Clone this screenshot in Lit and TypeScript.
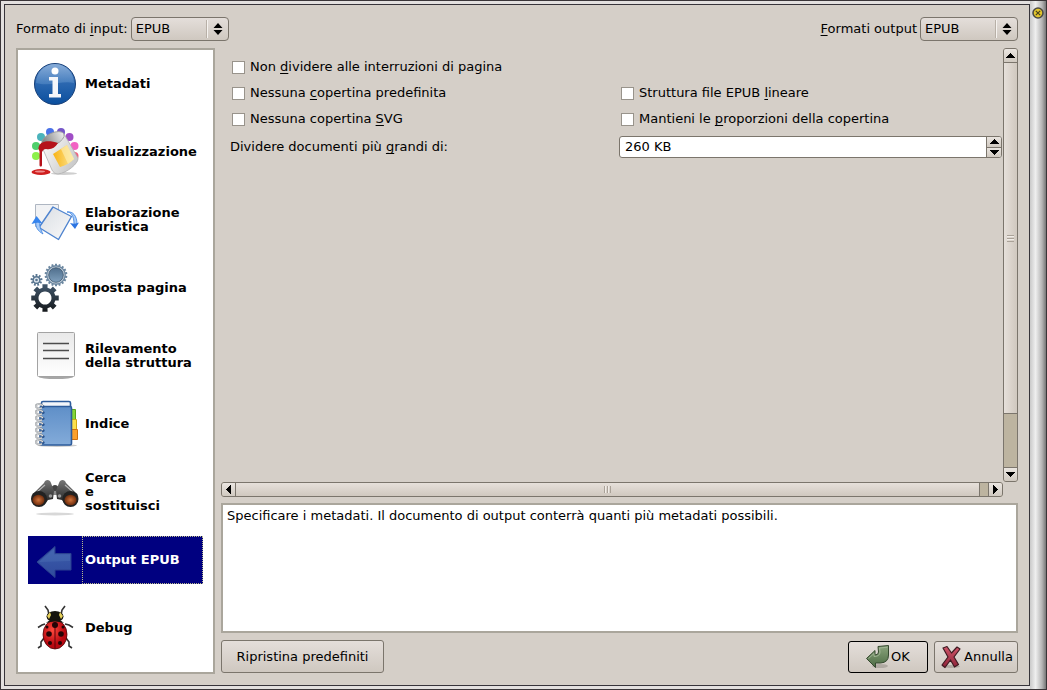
import { LitElement, html, css, svg, nothing, TemplateResult } from "lit";
import { customElement, property, state } from "lit/decorators.js";

/** Builds the outline of a cog wheel centred on (cx, cy). */
function cog(cx: number, cy: number, outer: number, inner: number, teeth: number): string {
  const points: string[] = [];
  const step = (Math.PI * 2) / teeth;
  const at = (r: number, a: number) =>
    `${(cx + r * Math.cos(a)).toFixed(2)} ${(cy + r * Math.sin(a)).toFixed(2)}`;
  for (let i = 0; i < teeth; i++) {
    const a = i * step - Math.PI / 2;
    points.push(at(inner, a - step * 0.3), at(outer, a - step * 0.24));
    points.push(at(outer, a + step * 0.24), at(inner, a + step * 0.3));
  }
  return `M${points.join("L")}Z`;
}

const gradient = (id: string, from: string, to: string, x2 = 0, y2 = 1) => svg`
  <linearGradient id=${id} x1="0" y1="0" x2=${x2} y2=${y2}>
    <stop offset="0" stop-color=${from}></stop><stop offset="1" stop-color=${to}></stop>
  </linearGradient>`;

const picture = (width: number, body: TemplateResult) =>
  html`<svg class="pic" width=${width} height="48" viewBox="0 0 ${width} 48" aria-hidden="true">${body}</svg>`;

const info = picture(48, svg`
  <defs>${gradient("in1", "#4a7ec0", "#0a4f9e")}${gradient("in2", "#a9c6e6", "#4f86c4")}</defs>
  <circle cx="25" cy="24" r="20.5" fill="url(#in1)" stroke="#173f78"></circle>
  <path d="M6 23a19 19 0 0 1 38 0c-11-3-24 4-38 0z" fill="url(#in2)" opacity=".65"></path>
  <circle cx="25" cy="11" r="3.500" fill="#fff"></circle>
  <path d="M19 17h9v17h3v3.500H19V34h3.500V20.500H19z" fill="#f4f6fa"></path>`);

const paint = picture(48, svg`
  <defs>${gradient("pa1", "#ffffff", "#c9c9c9", 1, 0.6)}${gradient("pa2", "#f9b314", "#fbe79a", 1, 0)}
  ${gradient("pa3", "#777", "#eee", 1, 0)}</defs>
  <circle cx="6" cy="18" r="4" fill="#4fcf6c"></circle><circle cx="6" cy="28" r="4" fill="#8df04c"></circle>
  <circle cx="11" cy="9" r="4" fill="#4bb3bb"></circle><circle cx="20" cy="4" r="4" fill="#4a72e8"></circle>
  <circle cx="31" cy="4" r="4" fill="#7657c8"></circle><circle cx="39.500" cy="9" r="4" fill="#a04ec6"></circle>
  <circle cx="44.500" cy="18" r="4" fill="#f263c4"></circle><circle cx="44.500" cy="28" r="4" fill="#f2617c"></circle>
  <ellipse cx="34" cy="45.500" rx="13" ry="1.500" fill="#bbb" opacity=".7"></ellipse>
  <path d="M12 19 34 6 48 30c1 5-11 15-20 16-3 0-5-2-6-4z" fill="url(#pa1)" stroke="#b0b0b0" stroke-width=".8"></path>
  <path d="m23 26 14-9 7 14q-6 6-14 8z" fill="url(#pa2)"></path>
  <path d="m31 21 6-4 7 14-6 5z" fill="#fdf0b8" opacity=".6"></path>
  <ellipse cx="23" cy="11" rx="12" ry="6" transform="rotate(-25 23 11)" fill="url(#pa3)" stroke="#999" stroke-width=".8"></ellipse>
  <path d="M9 18c2-5 10-6 19-3-3 5-7 7-12 6-2 0-3 1-4 3v13c0 2-2.500 2-2.500 0V23c-1-1-1.500-3-.5-5z" fill="#b5121b"></path>
  <ellipse cx="11" cy="44" rx="9.500" ry="3" fill="#cf1f1f"></ellipse>
  <ellipse cx="10" cy="43.500" rx="5" ry="1" fill="#ee8c8c"></ellipse>`);

const heuristic = picture(48, svg`
  <defs>${gradient("he1", "#d9dde3", "#fafafa", 1, 1)}</defs>
  <path d="M5.500 8.500h23v22h-23z" fill="#f1f2f4" stroke="#aeb6c2"></path>
  <path d="m23 11 18.500 9.500L28.500 43.500 9 31.500z" fill="url(#he1)" stroke="#4f84cf" stroke-width="1.400" stroke-linejoin="round"></path>
  <path d="M6 26c-1 5 2 9 7 12-2-4-4-8-3-12z" fill="#a7cbf8" stroke="#3a80e0" stroke-width=".8"></path>
  <path d="m1.500 28 5-8 6 7.500-5-1z" fill="#3584ee"></path>
  <path d="M37 16c4 0 7 4 7 12h3c0-8-4-13-10-12z" fill="#a7cbf8" stroke="#3a80e0" stroke-width=".8"></path>
  <path d="m40 27 5 1 4-1.500-4 6.500z" fill="#2b74e2"></path>`);

const gears = picture(36, svg`
  <defs>${gradient("ge1", "#41576c", "#15181b")}${gradient("ge2", "#4f6e8c", "#7fa0bd")}</defs>
  <path d=${cog(26, 11, 11.4, 9.8, 18)} fill="#6c87a0"></path>
  <circle cx="26" cy="11" r="8.600" fill="#c7d3de"></circle>
  <circle cx="26" cy="11" r="7.300" fill="url(#ge2)" stroke="#3c556d" stroke-width=".8"></circle>
  <path d=${cog(6.5, 16, 6, 4, 9)} fill="#587590"></path>
  <circle cx="6.500" cy="16" r="2.600" fill="#dfe7ee"></circle><circle cx="6.500" cy="16" r="1.300" fill="#587590"></circle>
  <path fill-rule="evenodd" d="${cog(15, 34, 14, 10.6, 8)}M15 27.500a6.500 6.500 0 1 0 .01 0z" fill="url(#ge1)"></path>`);

const structure = picture(48, svg`
  <defs>${gradient("st1", "#e9e9e9", "#ffffff")}</defs>
  <ellipse cx="26" cy="45" rx="17" ry="2" fill="#a6a6a6"></ellipse>
  <rect x="7.500" y=".5" width="37" height="44" rx="1" fill="url(#st1)" stroke="#a3a3a3"></rect>
  <path d="M13 11.500h26M13 18.500h26M13 26.500h26" stroke="#4c4c4c" stroke-width="1.400"></path>`);

const notebook = picture(48, svg`
  <defs>${gradient("no1", "#5f8fc8", "#83abd9")}</defs>
  <ellipse cx="27" cy="45.500" rx="20" ry="1.500" fill="#ccc"></ellipse>
  <path d="M41.500 9.500h4v10h-4z" fill="#85d636" stroke="#5aa51a"></path>
  <path d="M41.500 19.500h5v10h-5z" fill="#fbe04c" stroke="#cfa912"></path>
  <path d="M41.500 29.500h6v10h-6z" fill="#fba02c" stroke="#d3700a"></path>
  <rect x="11.500" y="1.500" width="29" height="9" rx="1.500" fill="#f3f6fa" stroke="#2d5c9c" stroke-width="1.600"></rect>
  <rect x="10" y="6.500" width="31.500" height="38.500" rx="1.500" fill="url(#no1)" stroke="#2d5c9c" stroke-width="1.600"></rect>
  ${[5, 11, 17, 23, 29, 35, 41].map((y) => svg`
    <circle cx="13" cy=${y + 1.5} r="1.600" fill="#2a5590"></circle>
    <path d="M13 ${y + 1}c-3-3-7-2-7 0s3 3 6 2" fill="none" stroke="#8f9499" stroke-width="2"></path>
    <path d="M13 ${y + 1}c-3-3-7-2-7 0s3 3 6 2" fill="none" stroke="#f0f1f2" stroke-width=".9"></path>`)}`);

const binoculars = picture(48, svg`
  <defs>${gradient("bi1", "#777", "#1c1c1c")}
  <radialGradient id="bi2"><stop offset="0" stop-color="#d0733a"></stop><stop offset="1" stop-color="#6e2c0c"></stop></radialGradient></defs>
  <ellipse cx="25" cy="46" rx="19" ry="1.500" fill="#d8d8d8"></ellipse>
  <path d="M20 18h10v9H20z" fill="#8a8a8a"></path><circle cx="25" cy="20" r="3" fill="#444"></circle>
  <path d="M2 27 14 15c1-4 6-4 7 0l3 8-1 8-5 1-3 4z" fill="url(#bi1)"></path>
  <path d="M48 27 36 15c-1-4-6-4-7 0l-3 8 1 8 5 1 3 4z" fill="url(#bi1)"></path>
  <path d="m7 24 8-7M43 24l-8-7" stroke="#b5b5b5" stroke-width="1.200"></path>
  <circle cx="9" cy="31" r="8" fill="#222"></circle><circle cx="40.500" cy="31" r="8" fill="#222"></circle>
  <ellipse cx="8.500" cy="32" rx="6" ry="5.300" fill="url(#bi2)"></ellipse>
  <ellipse cx="40.500" cy="32" rx="6" ry="5.300" fill="url(#bi2)"></ellipse>
  <circle cx="20.500" cy="28" r="1.800" fill="#999"></circle><circle cx="29.500" cy="28" r="1.800" fill="#999"></circle>`);

const arrow = picture(48, svg`
  <defs>${gradient("ar1", "#3d5dab", "#2f4a9c")}</defs>
  <path d="M7 26 25 10.500V17.500H41V34H25V41.500z" fill="url(#ar1)" stroke="#2a4190"></path>
  <path d="M9 26 24 13V18.500H40V25z" fill="#5377ba" opacity=".35"></path>`);

const ladybug = picture(48, svg`
  <defs><radialGradient id="la1" cx=".4" cy=".35"><stop offset="0" stop-color="#ff4a3d"></stop>
  <stop offset="1" stop-color="#b80710"></stop></radialGradient></defs>
  <path d="m19 11-1-5-3-4M31 11l1-5 3-4M15 20l-3 1-4 2.500M35 20l4 1 4 2.500M14 34l-3 4 0 4-3 2M36 34l3 4 0 4 3 2" fill="none" stroke="#333" stroke-width="1.600"></path>
  <ellipse cx="25" cy="12.500" rx="8.500" ry="5.500" fill="#15140e"></ellipse>
  <path d="m17 12 3-4 1 3-2 4zM33 12l-3-4-1 3 2 4z" fill="#e5d05a"></path>
  <ellipse cx="25" cy="30.500" rx="12" ry="14.500" fill="url(#la1)" stroke="#4a0508" stroke-width=".8"></ellipse>
  <path d="M16 19q9-8 18 0-9-3-18 0z" fill="#15140e"></path>
  <path d="M25 18v27" stroke="#5c0308"></path>
  <circle cx="25" cy="21" r="3" fill="#240406"></circle><circle cx="19" cy="30" r="2.800" fill="#240406"></circle>
  <circle cx="31" cy="30" r="2.800" fill="#240406"></circle><circle cx="17" cy="23" r="1.500" fill="#240406"></circle>
  <circle cx="33" cy="23" r="1.500" fill="#240406"></circle><circle cx="20" cy="39" r="2" fill="#240406"></circle>
  <circle cx="30" cy="39" r="2" fill="#240406"></circle>`);

interface Section {
  icon: TemplateResult;
  lines: string[];
}

const sections: Section[] = [
  { icon: info, lines: ["Metadati"] },
  { icon: paint, lines: ["Visualizzazione"] },
  { icon: heuristic, lines: ["Elaborazione", "euristica"] },
  { icon: gears, lines: ["Imposta pagina"] },
  { icon: structure, lines: ["Rilevamento", "della struttura"] },
  { icon: notebook, lines: ["Indice"] },
  { icon: binoculars, lines: ["Cerca", "e", "sostituisci"] },
  { icon: arrow, lines: ["Output EPUB"] },
  { icon: ladybug, lines: ["Debug"] },
];

const triangles: Record<string, string> = {
  up: "M0 5h9L4.500 0z",
  down: "M0 0h9L4.500 5z",
  left: "M5 0v9L0 4.500z",
  right: "M0 0v9l5-4.500z",
};

const triangle = (direction: string) => {
  const flat = direction === "up" || direction === "down";
  return html`<svg width=${flat ? 9 : 5} height=${flat ? 5 : 9} aria-hidden="true">
    <path d=${triangles[direction]} shape-rendering="crispEdges"></path></svg>`;
};

@customElement("scroll-strip")
export class ScrollStrip extends LitElement {
  @property({ reflect: true }) orientation: "vertical" | "horizontal" = "vertical";
  @property({ type: Number }) thumb = 80;

  static styles = css`
    :host {
      display: flex;
      box-sizing: border-box;
      background: #bdb4a0;
      border: 1px solid #7b756c;
      border-radius: 3px;
      overflow: hidden;
    }
    :host([orientation="vertical"]) {
      flex-direction: column;
      width: 15px;
    }
    :host([orientation="horizontal"]) {
      height: 15px;
    }
    button {
      all: unset;
      box-sizing: border-box;
      flex: none;
      display: grid;
      place-items: center;
      width: 13px;
      height: 13px;
      background: linear-gradient(#ebe6e1, #d0c9c0);
    }
    .track {
      flex: 1;
      display: flex;
      flex-direction: inherit;
    }
    :host([orientation="vertical"]) .track {
      border-top: 1px solid #7b756c;
      border-bottom: 1px solid #7b756c;
    }
    :host([orientation="horizontal"]) .track {
      border-left: 1px solid #7b756c;
      border-right: 1px solid #7b756c;
    }
    .thumb {
      box-sizing: border-box;
      display: grid;
      place-items: center;
    }
    :host([orientation="vertical"]) .thumb {
      border-bottom: 1px solid #7b756c;
      background: linear-gradient(90deg, #e6e0da, #d0c8bf);
    }
    :host([orientation="horizontal"]) .thumb {
      border-right: 1px solid #7b756c;
      background: linear-gradient(#e6e0da, #d0c8bf);
    }
    .grip {
      width: 7px;
      height: 7px;
    }
    :host([orientation="vertical"]) .grip {
      background: repeating-linear-gradient(#aaa298 0 1px, #f1ede8 1px 2px, transparent 2px 3px);
    }
    :host([orientation="horizontal"]) .grip {
      background: repeating-linear-gradient(90deg, #aaa298 0 1px, #f1ede8 1px 2px, transparent 2px 3px);
    }
  `;

  render() {
    const vertical = this.orientation === "vertical";
    return html`
      <button tabindex="-1" aria-label=${vertical ? "Su" : "Sinistra"}>${triangle(vertical ? "up" : "left")}</button>
      <div class="track">
        <div class="thumb" style="flex-basis:${this.thumb}%"><span class="grip"></span></div>
      </div>
      <button tabindex="-1" aria-label=${vertical ? "Giù" : "Destra"}>${triangle(vertical ? "down" : "right")}</button>
    `;
  }
}

@customElement("app-root")
export class AppRoot extends LitElement {
  @state() private current = 7;

  static styles = css`
    :host {
      display: flex;
      box-sizing: border-box;
      min-height: 100vh;
      border: 1px solid #3a3538;
      background: #e3e0df;
      font: 13px/16px "DejaVu Sans", sans-serif;
      color: #000;
    }
    button, input, select, textarea {
      font: inherit;
      color: inherit;
      margin: 0;
      box-sizing: border-box;
    }
    u {
      text-underline-offset: 2px;
      text-decoration-thickness: 1px;
      text-decoration-skip-ink: none;
    }
    .dialog {
      flex: 1;
      min-width: 0;
      display: flex;
      flex-direction: column;
      gap: 7px;
      margin: 3px 0;
      margin-left: 3px;
      padding: 12px 11px 11px;
      border: 1px solid #37343a;
      background: #d5cfc8;
    }
    .edge {
      width: 16px;
      display: flex;
      justify-content: center;
      align-items: flex-start;
      padding-top: 6px;
      box-sizing: border-box;
      background: linear-gradient(90deg, #c9c9c9, #efefef 35%, #b5b5b5 75%, #777);
    }
    .close {
      all: unset;
      display: flex;
    }
    .formats {
      display: flex;
      justify-content: space-between;
    }
    .format {
      display: flex;
      align-items: center;
      gap: 3px;
    }
    .combo {
      display: grid;
      align-items: center;
      width: 98px;
      height: 24px;
      box-sizing: border-box;
      border: 1px solid #7b756c;
      border-radius: 4px;
      background: linear-gradient(#e4deda, #cfc8c0);
    }
    .combo select, .combo .marks {
      grid-area: 1 / 1;
    }
    .combo select {
      appearance: none;
      border: 0;
      outline: 0;
      background: none;
      height: 22px;
      padding: 0 22px 0 4px;
    }
    .combo .marks {
      justify-self: end;
      width: 20px;
      height: 18px;
      border-left: 1px solid #f6f3f0;
      box-shadow: -1px 0 #b8b0a7;
      pointer-events: none;
    }
    .body {
      flex: 1;
      display: grid;
      grid-template-columns: 199px minmax(0, 1fr);
      gap: 6px;
    }
    .sections {
      display: flex;
      flex-direction: column;
      gap: 20px;
      padding: 10px;
      border: 2px solid #aaa69c;
      background: #fff;
    }
    .section {
      all: unset;
      box-sizing: border-box;
      display: flex;
      align-items: center;
      gap: 7px;
      height: 48px;
      padding-left: 2px;
      font-weight: bold;
      line-height: 14px;
    }
    .section .pic {
      flex: none;
      overflow: visible;
    }
    .section .caption {
      display: block;
    }
    .section.chosen {
      gap: 4px;
      color: #fff;
      background: #000080;
    }
    .section.chosen .caption {
      flex: 1;
      box-sizing: border-box;
      height: 48px;
      display: flex;
      align-items: center;
      padding-left: 2px;
      border: 1px dotted #b9b98a;
    }
    .main {
      display: flex;
      flex-direction: column;
    }
    .viewport {
      flex: 1;
      display: grid;
      grid-template: minmax(0, 1fr) 15px / minmax(0, 1fr) 15px;
    }
    .options {
      display: grid;
      grid-template-columns: 1fr 1fr;
      grid-auto-rows: minmax(20px, max-content);
      align-content: start;
      align-items: center;
      gap: 6px;
      padding: 9px 1px 0 9px;
    }
    .tick {
      display: flex;
      align-items: center;
      gap: 5px;
      padding-left: 2px;
    }
    .tick.wide {
      grid-column: 1 / -1;
    }
    .tick input {
      appearance: none;
      width: 13px;
      height: 13px;
      border: 1px solid #98938b;
      background: #fff;
    }
    .tick input:checked {
      box-shadow: inset 0 0 0 2px #fff;
      background: #333;
    }
    .spin {
      display: flex;
      height: 22px;
      margin: 1px 0;
      box-sizing: border-box;
      border: 1px solid #7b756c;
      border-radius: 3px;
      background: #fff;
      overflow: hidden;
    }
    .spin input {
      flex: 1;
      min-width: 0;
      border: 0;
      outline: 0;
      padding: 0 5px;
      background: none;
    }
    .steps {
      display: flex;
      flex-direction: column;
      width: 14px;
      border-left: 1px solid #7b756c;
    }
    .steps button {
      all: unset;
      flex: 1;
      display: grid;
      place-items: center;
      background: linear-gradient(#e9e4df, #d0c9c0);
    }
    .steps button + button {
      border-top: 1px solid #7b756c;
    }
    .help {
      display: block;
      width: 100%;
      height: 130px;
      margin-top: 6px;
      padding: 3px 4px;
      resize: none;
      border: 2px solid #aaa69c;
      outline: 0;
      background: #fff;
    }
    .actions {
      display: flex;
      align-items: center;
      gap: 6px;
      padding: 7px 0 1px;
    }
    .action {
      display: flex;
      align-items: center;
      justify-content: center;
      gap: 1px;
      width: 84px;
      height: 32px;
      padding: 0;
      border: 1px solid #7b756c;
      border-radius: 3px;
      background: linear-gradient(#e4deda, #cfc8c0);
      white-space: nowrap;
    }
    .reset {
      width: 163px;
      height: 33px;
      margin-right: auto;
    }
    .confirm {
      width: 80px;
      border-color: #000;
    }
  `;

  private combo(id: string) {
    return html`<span class="combo">
      <select id=${id}><option>EPUB</option></select>
      <svg class="marks" viewBox="-5 -3 19 18" aria-hidden="true">
        <path d="M0 5h9L4.500 0zM0 7h9l-4.500 5z"></path>
      </svg>
    </span>`;
  }

  private tick(label: TemplateResult, wide = false) {
    return html`<label class="tick ${wide ? "wide" : ""}"><input type="checkbox" /><span>${label}</span></label>`;
  }

  render() {
    return html`
      <main class="dialog">
        <header class="formats">
          <div class="format">
            <label for="input-format">Formato di <u>i</u>nput:</label>${this.combo("input-format")}
          </div>
          <div class="format">
            <label for="output-format"><u>F</u>ormati output</label>${this.combo("output-format")}
          </div>
        </header>
        <div class="body">
          <nav class="sections">
            ${sections.map((section, index) => html`
              <button
                class="section ${index === this.current ? "chosen" : ""}"
                aria-current=${index === this.current ? "page" : nothing}
                @click=${() => (this.current = index)}
              >${section.icon}<span class="caption">${section.lines.map((line, i) => html`${i ? html`<br />` : nothing}${line}`)}</span></button>`)}
          </nav>
          <div class="main">
            <div class="viewport">
              <div class="options">
                ${this.tick(html`Non <u>d</u>ividere alle interruzioni di pagina`, true)}
                ${this.tick(html`Nessuna <u>c</u>opertina predefinita`)}
                ${this.tick(html`Struttura file EPUB <u>l</u>ineare`)}
                ${this.tick(html`Nessuna copertina <u>S</u>VG`)}
                ${this.tick(html`Mantieni le <u>p</u>roporzioni della copertina`)}
                <label for="split-size">Dividere documenti più <u>g</u>randi di:</label>
                <div class="spin">
                  <input id="split-size" type="text" value="260 KB" />
                  <span class="steps">
                    <button tabindex="-1" aria-label="Aumenta">${triangle("up")}</button>
                    <button tabindex="-1" aria-label="Diminuisci">${triangle("down")}</button>
                  </span>
                </div>
              </div>
              <scroll-strip orientation="vertical" .thumb=${87}></scroll-strip>
              <scroll-strip orientation="horizontal" .thumb=${99}></scroll-strip>
            </div>
            <textarea class="help" readonly aria-label="Descrizione" .value=${"Specificare i metadati. Il documento di output conterrà quanti più metadati possibili."}></textarea>
            <footer class="actions">
              <button class="action reset">Ripristina predefiniti</button>
              <button class="action confirm">
                <svg width="24" height="24" viewBox="0 0 24 24" aria-hidden="true">
                  <defs>${gradient("ok1", "#8aa37c", "#4c6b43")}</defs>
                  <ellipse cx="14" cy="21" rx="8" ry="2" fill="#8d887f" opacity=".5"></ellipse>
                  <path d="M.5 13.500 9 5.500V10q3.500 0 3.500-3L12 1.500 22.500.5V10q0 7.500-8 8H9.500v4.500z" fill="url(#ok1)" stroke="#34482e" stroke-linejoin="round"></path>
                  <path d="m2.500 13.500 5.500-5V11.500q6 0 6-4.500L13.500 3l8-.800" fill="none" stroke="#a9bd9d" stroke-width=".8"></path>
                </svg>OK
              </button>
              <button class="action">
                <svg width="24" height="24" viewBox="0 0 24 24" aria-hidden="true">
                  <defs>${gradient("no2", "#d0566a", "#8e2238")}</defs>
                  <ellipse cx="12" cy="21.500" rx="9" ry="1.500" fill="#8d887f" opacity=".5"></ellipse>
                  <path d="m4 3 4-1.500 4.500 6.500L18 2l3 2-6 8 4.500 7.500-4 2.500-4-7L6 22.500 3 20l6-8z" fill="url(#no2)" stroke="#3f1b22" stroke-width="1.200" stroke-linejoin="round"></path>
                </svg>Annulla
              </button>
            </footer>
          </div>
        </div>
      </main>
      <aside class="edge">
        <button class="close" aria-label="Chiudi">
          <svg width="12" height="12" viewBox="0 0 12 12" aria-hidden="true">
            <circle cx="6" cy="6" r="5" fill="#e3c62c" stroke="#4b4a45" stroke-width="1.600"></circle>
            <path d="m3.800 3.800 4.400 4.400m0-4.400L3.800 8.200" stroke="#4b431a" stroke-width="1.200"></path>
          </svg>
        </button>
      </aside>
    `;
  }
}
